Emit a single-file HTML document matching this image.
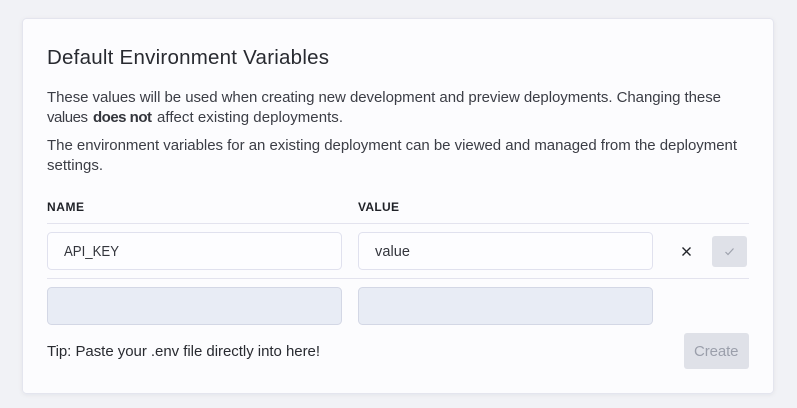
<!DOCTYPE html>
<html><head><meta charset="utf-8"><style>
html,body{margin:0;padding:0;background:#f1f2f6;width:797px;height:408px;overflow:hidden}
svg{display:block}
text{font-family:"Liberation Sans",sans-serif}
</style></head><body>
<svg width="797" height="408" viewBox="0 0 797 408" xmlns="http://www.w3.org/2000/svg">
<defs><filter id="s" x="-5%" y="-5%" width="110%" height="110%"><feDropShadow dx="0" dy="1" stdDeviation="2" flood-color="#1b1f3b" flood-opacity=".06"/></filter></defs>
<rect x="22.5" y="18.5" width="751" height="375" rx="4" fill="#fcfcfe" stroke="#e4e5ee" filter="url(#s)"/>
<text x="47" y="64" font-size="20.5" fill="#282a30" textLength="282" lengthAdjust="spacing">Default Environment Variables</text>
<g font-size="15" fill="#3b3d45">
<text x="47" y="102" textLength="674" lengthAdjust="spacing">These values will be used when creating new development and preview deployments. Changing these</text>
<text x="47" y="122" textLength="41" lengthAdjust="spacing">values</text>
<text x="93" y="122" font-weight="700" fill="#33353c" textLength="59" lengthAdjust="spacing">does not</text>
<text x="157" y="122" textLength="186" lengthAdjust="spacing">affect existing deployments.</text>
<text x="47" y="150" textLength="690" lengthAdjust="spacing">The environment variables for an existing deployment can be viewed and managed from the deployment</text>
<text x="47" y="170" textLength="56" lengthAdjust="spacing">settings.</text>
</g>
<g font-size="12" font-weight="700" fill="#1f2127">
<text x="47" y="211" textLength="37" lengthAdjust="spacing">NAME</text>
<text x="358" y="211" textLength="41" lengthAdjust="spacing">VALUE</text>
</g>
<rect x="47" y="223" width="702" height="1" fill="#e3e3ee"/>
<rect x="47" y="278" width="702" height="1" fill="#e3e3ee"/>
<rect x="47.5" y="232.5" width="294" height="37" rx="4" fill="#fdfdff" stroke="#e0e1ee"/>
<rect x="358.5" y="232.5" width="294" height="37" rx="4" fill="#fdfdff" stroke="#e0e1ee"/>
<rect x="47.5" y="287.5" width="294" height="37" rx="4" fill="#e8ecf5" stroke="#d3d7e5"/>
<rect x="358.5" y="287.5" width="294" height="37" rx="4" fill="#e8ecf5" stroke="#d3d7e5"/>
<g font-size="14.5" fill="#33353c">
<text x="64" y="256" textLength="55" lengthAdjust="spacingAndGlyphs">API_KEY</text>
<text x="375" y="256" textLength="35" lengthAdjust="spacing">value</text>
</g>
<text x="47" y="356" font-size="15" fill="#282a30" textLength="273" lengthAdjust="spacing">Tip: Paste your .env file directly into here!</text>
<path d="M682.5 247.5l8 8M690.5 247.5l-8 8" stroke="#22242a" stroke-width="1.4" fill="none"/>
<rect x="712" y="236" width="35" height="31" rx="3" fill="#dfe1e8"/>
<path d="M725.5 252l2.5 2.5 5.5-6" stroke="#9ea2ad" stroke-width="1.2" fill="none"/>
<rect x="684" y="333" width="65" height="36" rx="3" fill="#dfe1e8"/>
<text x="694" y="356" font-size="15" fill="#9b9fab" textLength="44.5" lengthAdjust="spacing">Create</text>
</svg>
</body></html>
